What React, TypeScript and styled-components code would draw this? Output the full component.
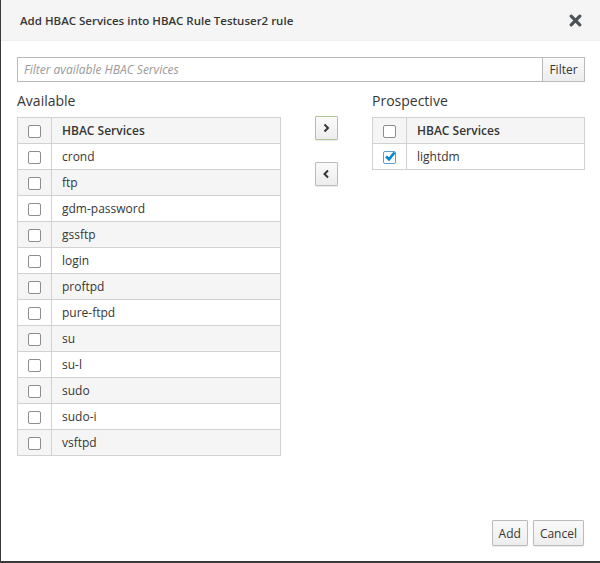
import React from "react";
import styled, { createGlobalStyle } from "styled-components";

const GlobalStyle = createGlobalStyle`
  html, body {
    margin: 0;
    padding: 0;
    background: #3a3a3a;
    font-family: "Open Sans", "Liberation Sans", sans-serif;
    color: #363636;
  }
`;

const available = [
  "crond",
  "ftp",
  "gdm-password",
  "gssftp",
  "login",
  "proftpd",
  "pure-ftpd",
  "su",
  "su-l",
  "sudo",
  "sudo-i",
  "vsftpd",
];

const prospective = ["lightdm"];

export default function App() {
  return (
    <>
      <GlobalStyle />
      <Modal>
        <Header>
          <Title>Add HBAC Services into HBAC Rule Testuser2 rule</Title>
          <Close aria-label="Close">
            <svg width="13" height="13" viewBox="0 0 13 13">
              <path
                d="M2.2 2.2 L10.8 10.8 M10.8 2.2 L2.2 10.8"
                stroke="#4d5258"
                strokeWidth="3.2"
                strokeLinecap="round"
              />
            </svg>
          </Close>
        </Header>

        <Body>
          <FilterRow>
            <FilterInput placeholder="Filter available HBAC Services" />
            <FilterButton>Filter</FilterButton>
          </FilterRow>

          <Columns>
            <Column>
              <ColumnLabel>Available</ColumnLabel>
              <ServiceTable items={available} />
            </Column>

            <Arrows>
              <ArrowButton $active>
                <Chevron dir="right" />
              </ArrowButton>
              <ArrowButton>
                <Chevron dir="left" />
              </ArrowButton>
            </Arrows>

            <Column>
              <ColumnLabel>Prospective</ColumnLabel>
              <ServiceTable items={prospective} checked />
            </Column>
          </Columns>
        </Body>

        <Footer>
          <Button>Add</Button>
          <Button>Cancel</Button>
        </Footer>
      </Modal>
    </>
  );
}

function ServiceTable({ items, checked }: { items: string[]; checked?: boolean }) {
  return (
    <Table>
      <thead>
        <tr>
          <CheckCell as="th">
            <Box />
          </CheckCell>
          <HeadCell>HBAC Services</HeadCell>
        </tr>
      </thead>
      <tbody>
        {items.map((name, i) => (
          <Row key={name} $striped={i % 2 === 1}>
            <CheckCell>
              <Box $checked={checked}>
                {checked && (
                  <Tick width="12" height="11" viewBox="0 0 12 11">
                    <path
                      d="M2 5.5 L5 8.3 L10.5 1.5"
                      fill="none"
                      stroke="#0088ce"
                      strokeWidth="2.6"
                    />
                  </Tick>
                )}
              </Box>
            </CheckCell>
            <Cell>{name}</Cell>
          </Row>
        ))}
      </tbody>
    </Table>
  );
}

function Chevron({ dir }: { dir: "left" | "right" }) {
  const d = dir === "right" ? "M2.5 1.5 L6 5 L2.5 8.5" : "M6 1.5 L2.5 5 L6 8.5";
  return (
    <svg width="9" height="10" viewBox="0 0 9 10">
      <path d={d} fill="none" stroke="#363636" strokeWidth="2" />
    </svg>
  );
}

const Modal = styled.div`
  margin-left: 1px;
  width: 599px;
  height: 561px;
  background: #fff;
  display: flex;
  flex-direction: column;
  box-sizing: border-box;
`;

const Header = styled.div`
  height: 41px;
  flex: none;
  background: #f5f5f5;
  border-bottom: 1px solid #f0f0f0;
  box-sizing: border-box;
  display: flex;
  align-items: center;
  justify-content: space-between;
  padding: 0 18px 0 19px;
`;

const Title = styled.h4`
  margin: 0;
  font-size: 11.5px;
  font-weight: 600;
  color: #363636;
`;

const Close = styled.button`
  border: none;
  background: none;
  padding: 0;
  display: flex;
  cursor: pointer;
`;

const Body = styled.div`
  flex: 1;
  padding: 16px 15px 0 16px;
`;

const FilterRow = styled.div`
  display: flex;
  height: 25px;
`;

const FilterInput = styled.input`
  flex: 1;
  height: 25px;
  box-sizing: border-box;
  border: 1px solid #bababa;
  border-right: none;
  padding: 2px 6px;
  font-family: "Open Sans", "Liberation Sans", sans-serif;
  font-size: 12px;
  outline: none;
  &::placeholder {
    color: #999;
    font-style: italic;
  }
`;

const FilterButton = styled.button`
  width: 43px;
  height: 25px;
  box-sizing: border-box;
  border: 1px solid #bbb;
  background: linear-gradient(#fafafa, #ededed);
  font-family: "Open Sans", "Liberation Sans", sans-serif;
  font-size: 12px;
  color: #363636;
  padding: 0;
`;

const Columns = styled.div`
  display: flex;
  margin-top: 9px;
`;

const Column = styled.div`
  display: flex;
  flex-direction: column;
  &:first-child {
    width: 264px;
  }
  &:last-child {
    width: 213px;
  }
`;

const ColumnLabel = styled.div`
  font-size: 14px;
  line-height: 19px;
  height: 19px;
  margin-bottom: 7px;
  color: #363636;
`;

const Arrows = styled.div`
  width: 91px;
  display: flex;
  flex-direction: column;
  align-items: center;
  padding-top: 25px;
  gap: 22px;
`;

const ArrowButton = styled.button<{ $active?: boolean }>`
  width: 23px;
  height: 24px;
  flex: none;
  box-sizing: border-box;
  padding: 0;
  display: flex;
  align-items: center;
  justify-content: center;
  background: linear-gradient(#fafafa, #ededed);
  border: 1px solid ${(p) => (p.$active ? "#a9c79b" : "#bbb")};
  box-shadow: 0 1px 1px rgba(0, 0, 0, 0.08);
  border-radius: 1px;
`;

const Table = styled.table`
  border-collapse: collapse;
  width: 100%;
  font-size: 12px;
  border: 1px solid #d1d1d1;
`;

const HeadCell = styled.th`
  text-align: left;
  font-weight: 600;
  height: 25px;
  padding: 0 10px;
  background: #f5f5f5;
  border: 1px solid #d1d1d1;
  color: #363636;
`;

const Row = styled.tr<{ $striped?: boolean }>`
  background: ${(p) => (p.$striped ? "#f5f5f5" : "#fff")};
`;

const CheckCell = styled.td`
  width: 33px;
  height: 25px;
  padding: 0;
  border: 1px solid #d1d1d1;
  text-align: center;
  vertical-align: middle;
  thead & {
    background: #f5f5f5;
  }
`;

const Cell = styled.td`
  height: 25px;
  padding: 0 10px;
  border: 1px solid #d1d1d1;
  color: #363636;
`;

const Box = styled.span<{ $checked?: boolean }>`
  display: inline-block;
  width: 11px;
  height: 11px;
  border: 1px solid #8b8d8f;
  border-radius: 2px;
  background: #fff;
  vertical-align: middle;
  position: relative;
  ${(p) => p.$checked && "border-color: #5a9fd4;"}
`;

const Tick = styled.svg`
  position: absolute;
  left: 0;
  top: -1px;
`;

const Footer = styled.div`
  display: flex;
  justify-content: flex-end;
  gap: 5px;
  padding: 0 16px 15px 0;
`;

const Button = styled.button`
  height: 26px;
  box-sizing: border-box;
  padding: 0 6px;
  border: 1px solid #bbb;
  background: linear-gradient(#fafafa, #ededed);
  font-family: "Open Sans", "Liberation Sans", sans-serif;
  font-size: 12px;
  color: #363636;
  border-radius: 1px;
  box-shadow: 0 1px 1px rgba(0, 0, 0, 0.08);
`;
